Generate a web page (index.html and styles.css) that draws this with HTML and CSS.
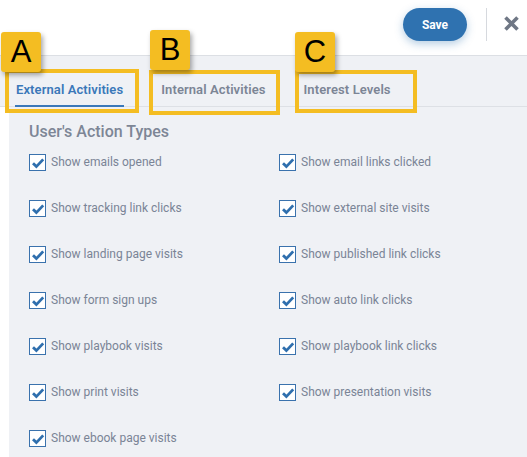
FILE: index.html
```html
<!DOCTYPE html>
<html>
<head>
<meta charset="utf-8">
<link rel="stylesheet" href="styles.css">
</head>
<body>
<div class="page">
  <header class="topbar">
    <button class="save">Save</button>
    <span class="sep"></span>
    <svg class="close" width="17" height="17" viewBox="0 0 17 17"><path d="M2.5 2.5 L14.5 14.5 M14.5 2.5 L2.5 14.5" stroke="#6f7785" stroke-width="3.6" stroke-linecap="butt"/></svg>
  </header>
  <nav class="tabs">
    <div class="tab active">External Activities</div>
    <div class="tab">Internal Activities</div>
    <div class="tab">Interest Levels</div>
  </nav>
  <section class="panel">
    <h2 class="heading">User's Action Types</h2>
    <div class="grid">
      <label class="item"><span class="cb"><svg width="14" height="14" viewBox="0 0 14 14"><path d="M2 7.2 L5.4 10.6 L12.2 3.4" fill="none" stroke="#2f6fae" stroke-width="2.8"/></svg></span>Show emails opened</label>
      <label class="item"><span class="cb"><svg width="14" height="14" viewBox="0 0 14 14"><path d="M2 7.2 L5.4 10.6 L12.2 3.4" fill="none" stroke="#2f6fae" stroke-width="2.8"/></svg></span>Show email links clicked</label>
      <label class="item"><span class="cb"><svg width="14" height="14" viewBox="0 0 14 14"><path d="M2 7.2 L5.4 10.6 L12.2 3.4" fill="none" stroke="#2f6fae" stroke-width="2.8"/></svg></span>Show tracking link clicks</label>
      <label class="item"><span class="cb"><svg width="14" height="14" viewBox="0 0 14 14"><path d="M2 7.2 L5.4 10.6 L12.2 3.4" fill="none" stroke="#2f6fae" stroke-width="2.8"/></svg></span>Show external site visits</label>
      <label class="item"><span class="cb"><svg width="14" height="14" viewBox="0 0 14 14"><path d="M2 7.2 L5.4 10.6 L12.2 3.4" fill="none" stroke="#2f6fae" stroke-width="2.8"/></svg></span>Show landing page visits</label>
      <label class="item"><span class="cb"><svg width="14" height="14" viewBox="0 0 14 14"><path d="M2 7.2 L5.4 10.6 L12.2 3.4" fill="none" stroke="#2f6fae" stroke-width="2.8"/></svg></span>Show published link clicks</label>
      <label class="item"><span class="cb"><svg width="14" height="14" viewBox="0 0 14 14"><path d="M2 7.2 L5.4 10.6 L12.2 3.4" fill="none" stroke="#2f6fae" stroke-width="2.8"/></svg></span>Show form sign ups</label>
      <label class="item"><span class="cb"><svg width="14" height="14" viewBox="0 0 14 14"><path d="M2 7.2 L5.4 10.6 L12.2 3.4" fill="none" stroke="#2f6fae" stroke-width="2.8"/></svg></span>Show auto link clicks</label>
      <label class="item"><span class="cb"><svg width="14" height="14" viewBox="0 0 14 14"><path d="M2 7.2 L5.4 10.6 L12.2 3.4" fill="none" stroke="#2f6fae" stroke-width="2.8"/></svg></span>Show playbook visits</label>
      <label class="item"><span class="cb"><svg width="14" height="14" viewBox="0 0 14 14"><path d="M2 7.2 L5.4 10.6 L12.2 3.4" fill="none" stroke="#2f6fae" stroke-width="2.8"/></svg></span>Show playbook link clicks</label>
      <label class="item"><span class="cb"><svg width="14" height="14" viewBox="0 0 14 14"><path d="M2 7.2 L5.4 10.6 L12.2 3.4" fill="none" stroke="#2f6fae" stroke-width="2.8"/></svg></span>Show print visits</label>
      <label class="item"><span class="cb"><svg width="14" height="14" viewBox="0 0 14 14"><path d="M2 7.2 L5.4 10.6 L12.2 3.4" fill="none" stroke="#2f6fae" stroke-width="2.8"/></svg></span>Show presentation visits</label>
      <label class="item"><span class="cb"><svg width="14" height="14" viewBox="0 0 14 14"><path d="M2 7.2 L5.4 10.6 L12.2 3.4" fill="none" stroke="#2f6fae" stroke-width="2.8"/></svg></span>Show ebook page visits</label>
    </div>
  </section>

  <div class="label label-a">A</div>
  <div class="frame frame-a"></div>
  <div class="label label-b">B</div>
  <div class="frame frame-b"></div>
  <div class="label label-c">C</div>
  <div class="frame frame-c"></div>
</div>
</body>
</html>
```

FILE: styles.css
```css
* { box-sizing: border-box; }
html, body { margin: 0; padding: 0; background: #ffffff; }
body {
  font-family: Roboto, "Noto Sans", sans-serif;
  width: 527px;
  height: 457px;
  overflow: hidden;
}
.page {
  position: relative;
  width: 527px;
  height: 457px;
  display: flex;
  flex-direction: column;
}

.topbar {
  height: 56px;
  flex: none;
  background: #ffffff;
  border-bottom: 1px solid #dcdfe4;
  display: flex;
  align-items: flex-start;
  justify-content: flex-end;
  padding-top: 8px;
}
.save {
  width: 64px;
  height: 33px;
  border: none;
  border-radius: 17px;
  background: #2f72b0;
  color: #ffffff;
  font-family: Roboto, sans-serif;
  font-weight: 700;
  font-size: 12px;
  box-shadow: 0 3px 8px rgba(47, 114, 176, 0.35);
  padding: 0;
}
.sep {
  width: 1px;
  height: 33px;
  background: #d6d9de;
  margin-left: 19px;
}
.close { margin: 7px 7px 0 16px; }

.tabs {
  height: 51px;
  flex: none;
  background: #eff1f5;
  border-bottom: 1px solid #dde0e5;
  display: flex;
  align-items: stretch;
  padding-left: 15px;
}
.tab {
  font-size: 13px;
  font-weight: 600;
  color: #7c8595;
  display: flex;
  align-items: center;
  padding-top: 18px;
  margin-right: 38px;
  border-bottom: 2px solid transparent;
  margin-bottom: -1px;
  letter-spacing: 0.1px;
}
.tab:first-child { padding: 18px 1px 0 1px; margin-right: 37px; }
.tab.active { color: #3a78b9; border-bottom-color: #3a78b9; }

.panel {
  flex: 1;
  margin-left: 9px;
  background: #eff1f5;
  padding: 15px 0 0 20px;
}
.heading {
  margin: 0;
  font-size: 16px;
  font-weight: 500;
  color: #7d8696;
  line-height: 20px;
}
.grid {
  display: grid;
  grid-template-columns: 250px 240px;
  grid-auto-rows: 46px;
  margin-top: 12px;
}
.item {
  display: flex;
  align-items: flex-start;
  font-size: 12px;
  color: #7a8496;
  line-height: 17px;
}
.cb {
  width: 17px;
  height: 17px;
  background: #ffffff;
  border: 1.5px solid #3a72ad;
  margin-right: 5px;
  display: flex;
  align-items: center;
  justify-content: center;
  flex: none;
}

.label {
  position: absolute;
  width: 40px;
  height: 40px;
  background: #f4bd22;
  border-radius: 3px;
  box-shadow: 2px 3px 5px rgba(0,0,0,0.35);
  font-family: "Liberation Sans", Arial, sans-serif;
  font-size: 31px;
  color: #000;
  display: flex;
  align-items: center;
  justify-content: center;
  z-index: 3;
}
.frame {
  position: absolute;
  border: 4px solid #f4bd22;
  z-index: 2;
}
.label-a { left: 1px; top: 32px; }
.frame-a { left: 5px; top: 69px; width: 134px; height: 44px; }
.label-b { left: 150px; top: 30px; }
.frame-b { left: 149px; top: 70px; width: 131px; height: 45px; }
.label-c { left: 295px; top: 32px; }
.frame-c { left: 295px; top: 70px; width: 122px; height: 43px; }
```
